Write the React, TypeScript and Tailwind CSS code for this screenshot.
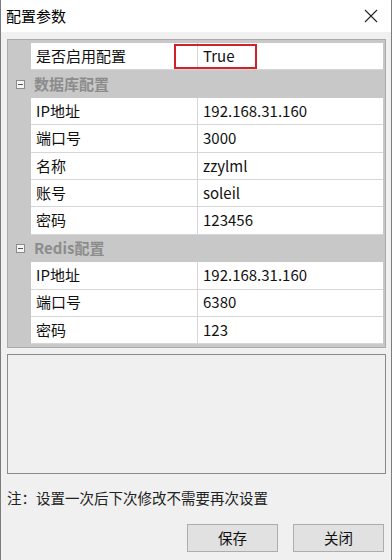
import React from "react";

const rowsDb = [
  ["IP地址", "192.168.31.160"],
  ["端口号", "3000"],
  ["名称", "zzylml"],
  ["账号", "soleil"],
  ["密码", "123456"],
];
const rowsRedis = [
  ["IP地址", "192.168.31.160"],
  ["端口号", "6380"],
  ["密码", "123"],
];

function Row({ k, v, red }: { k: string; v: string; red?: boolean }) {
  return (
    <div className="flex h-[27.4px]">
      <div className="w-[22px] bg-[#c8c8c8]" />
      <div className="relative w-[167px] bg-white border-b border-r border-[#d6d6d6] flex items-center pl-[5px] text-[15px] text-[#111]">
        {k}
        {red && (
          <div className="absolute left-[143px] top-[1px] w-[83px] h-[25px] border-2 border-[#d4202a] z-10" />
        )}
      </div>
      <div className="flex-1 bg-white border-b border-[#d6d6d6] flex items-center pl-[5px] text-[15px] text-[#111]">
        {v}
      </div>
    </div>
  );
}

function Cat({ t }: { t: string }) {
  return (
    <div className="flex h-[27.4px] bg-[#c8c8c8] items-center">
      <div className="w-[22px] flex items-center justify-center">
        <div className="w-[9px] h-[9px] border border-[#8c8c8c] bg-[#f4f4f4] flex items-center justify-center">
          <div className="w-[5px] h-[1px] bg-[#555]" />
        </div>
      </div>
      <div className="pl-[3px] text-[15px] font-bold text-[#8c8c8c]">{t}</div>
    </div>
  );
}

export default function App() {
  return (
    <div
      className="w-[392px] h-[560px] bg-[#f0f0f0] border-x border-[#7c7c7c] flex flex-col"
      style={{ fontFamily: "'Microsoft YaHei','Noto Sans CJK SC',sans-serif" }}
    >
      <div className="h-[32px] bg-white flex items-center justify-between pl-[5px] pr-[13px] shrink-0">
        <span className="text-[15px] text-black">配置参数</span>
        <svg width="14" height="14" viewBox="0 0 14 14">
          <path d="M1 1L13 13M13 1L1 13" stroke="#222" strokeWidth="1.1" />
        </svg>
      </div>
      <div className="flex flex-col pl-[6px] pr-[5px] pt-[7px]">
        <div className="border border-[#a9a9a9] bg-[#c8c8c8] pt-[3px] pr-[2px] pb-[3px] pl-[1px]">
          <Row k="是否启用配置" v="True" red />
          <Cat t="数据库配置" />
          {rowsDb.map(([k, v]) => (
            <Row key={"d" + k} k={k} v={v} />
          ))}
          <Cat t="Redis配置" />
          {rowsRedis.map(([k, v]) => (
            <Row key={"r" + k} k={k} v={v} />
          ))}
        </div>
        <div className="mt-[6px] h-[120px] border border-[#8a8a8a] bg-[#f0f0f0]" />
        <div className="mt-[14px] text-[14.5px] text-[#222] leading-[20px]">
          注：设置一次后下次修改不需要再次设置
        </div>
        <div className="mt-[16px] flex justify-end gap-[15px] pr-[2px]">
          <button className="w-[91px] h-[28px] bg-[#e1e1e1] border border-[#adadad] text-[14.5px] text-[#111]">
            保存
          </button>
          <button className="w-[91px] h-[28px] bg-[#e1e1e1] border border-[#adadad] text-[14.5px] text-[#111]">
            关闭
          </button>
        </div>
      </div>
    </div>
  );
}
